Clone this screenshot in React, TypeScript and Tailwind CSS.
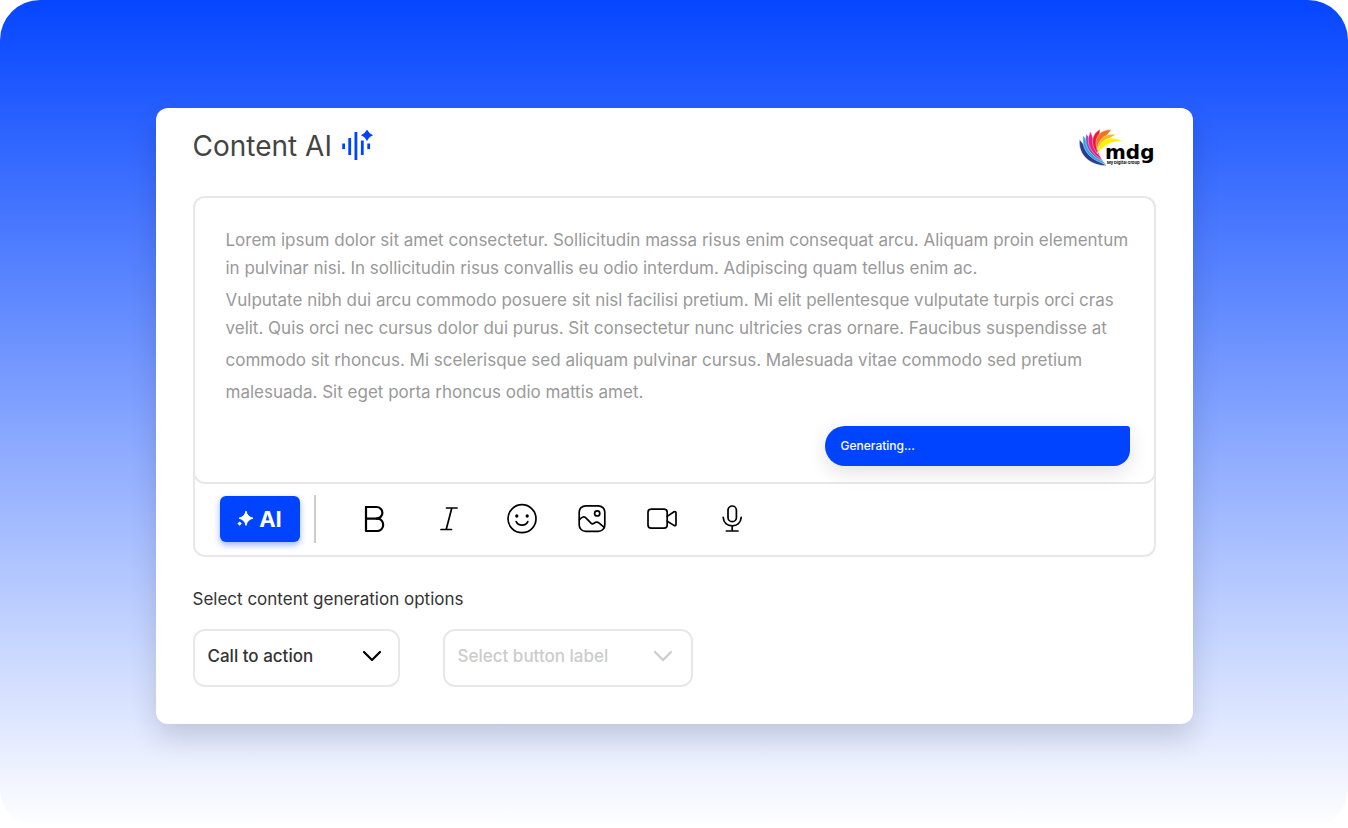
import { useState } from "react";
import type { ReactNode } from "react";

const paragraphs = [
  [
    "Lorem ipsum dolor sit amet consectetur. Sollicitudin massa risus enim consequat arcu. Aliquam proin elementum",
    "in pulvinar nisi. In sollicitudin risus convallis eu odio interdum. Adipiscing quam tellus enim ac.",
  ],
  [
    "Vulputate nibh dui arcu commodo posuere sit nisl facilisi pretium. Mi elit pellentesque vulputate turpis orci cras",
    "velit. Quis orci nec cursus dolor dui purus. Sit consectetur nunc ultricies cras ornare. Faucibus suspendisse at",
  ],
  [
    "commodo sit rhoncus. Mi scelerisque sed aliquam pulvinar cursus. Malesuada vitae commodo sed pretium",
  ],
  ["malesuada. Sit eget porta rhoncus odio mattis amet."],
];

const tools = [
  {
    name: "Bold",
    classes: "w-[34px]",
    icon: (
      <>
        <path d="M7 4V28H19a6.3 6.3 0 0 0 0-12.4H7" />
        <path d="M7 4H17.6a5.8 5.8 0 0 1 0 11.6" />
      </>
    ),
  },
  {
    name: "Italic",
    classes: "w-[38px]",
    icon: <path d="M13.5 5H24M8 26.5H18.5M18.8 5L13.2 26.5" />,
  },
  {
    name: "Emoji",
    classes: "w-8",
    icon: (
      <>
        <circle cx="16" cy="15.7" r="14" />
        <path d="M10.2 18.6C12.2 23.3 19.8 23.3 21.8 18.6" />
        <circle cx="10.8" cy="13" r="0.8" fill="currentColor" />
        <circle cx="21.2" cy="13" r="0.8" fill="currentColor" />
      </>
    ),
  },
  {
    name: "Image",
    classes: "w-8",
    icon: (
      <>
        <rect x="3.2" y="2.8" width="25.6" height="25.6" rx="6.5" />
        <circle cx="21.2" cy="10.4" r="2.6" />
        <path d="M3.4 16.8C6 13.6 8.3 13 10.6 15.6L15 20.2C16 21.2 17 21 18 20.3C20 18.8 21.4 18.7 23.2 20.2L28.2 24.4" />
      </>
    ),
  },
  {
    name: "Video",
    classes: "w-8",
    icon: (
      <>
        <rect x="2" y="6.2" width="19.2" height="19" rx="3.2" />
        <path d="M21.2 13.4L28 8.8Q30 8 30 10V21.2Q30 23.2 28 22.4L21.2 18.2" />
      </>
    ),
  },
  {
    name: "Voice",
    classes: "w-8",
    icon: (
      <>
        <rect x="12" y="3" width="8.4" height="15.6" rx="4.2" />
        <path d="M7.2 14.4C7.6 19.6 11.2 22.8 16.2 22.8S24.8 19.6 25.2 14.4M16.2 22.8V28M10.4 28H22" />
      </>
    ),
  },
];

export default function App() {
  const [action, setaction] = useState("Call to action");

  return (
    <div className="bg-white font-[Inter,sans-serif]">
      <main className="flex min-h-screen justify-center rounded-[40px] bg-linear-to-b/srgb from-[#0546ff] to-white px-6 pt-[108px] pb-[104px]">
        <section className="w-full max-w-[1037px] rounded-xl bg-white px-[37px] pt-3.5 pb-9 shadow-[0_14px_28px_rgba(0,0,0,0.14)]">
          <header className="flex items-center justify-between pb-[26px]">
            <div className="flex items-center gap-2.5">
              <h1 className="text-[28px] leading-10 text-[#444]">Content AI</h1>
              <VoiceMark />
            </div>
            <Logo />
          </header>

          {/* Editor */}
          <div className="rounded-xl border-2 border-t-0 border-[#e8e8e8]">
            <div className="-mx-0.5 flex flex-col rounded-xl border-2 border-[#e8e8e8] pt-7 pr-6 pb-4 pl-[31px]">
              <div
                contentEditable
                suppressContentEditableWarning
                role="textbox"
                aria-multiline="true"
                aria-label="Content"
                className="flex flex-col gap-1 text-[17px] leading-7 text-[#999] outline-none"
              >
                {paragraphs.map((lines, index) => (
                  <p key={index}>
                    {lines.map((line) => (
                      <span key={line} className="block">
                        {line}
                      </span>
                    ))}
                  </p>
                ))}
              </div>
              <div
                role="status"
                className="mt-5 w-full max-w-[305px] self-end rounded-[20px] rounded-tr-[3px] rounded-br-2xl bg-[#0044ff] px-4 py-2.5 text-xs leading-5 font-medium text-white shadow-[0_6px_20px_rgba(0,0,0,0.12)]"
              >
                Generating...
              </div>
            </div>

            <div className="flex items-center px-[25px] pt-[11px] pb-3">
              <button className="flex h-[46px] w-20 cursor-pointer items-center justify-center gap-1.5 rounded-md bg-[#0044ff] text-[22px] font-bold text-white shadow-[0_3px_6px_rgba(5,70,255,0.4)]">
                <svg width="16" height="16" viewBox="0 0 16 16" fill="currentColor" aria-hidden="true">
                  <path d="M9 0Q10.2 5.8 16 7.2Q10.2 8.6 9 14.4Q7.8 8.6 2 7.2Q7.8 5.8 9 0Z" stroke="currentColor" strokeLinejoin="round" />
                  <path d="M2.6 10.4L4.8 12.6L2.6 14.8L0.4 12.6Z" />
                </svg>
                AI
              </button>
              <div className="ml-3.5 h-12 border-l-2 border-[#ccc]"></div>
              <div className="ml-[42px] flex items-center gap-[38px]">
                {tools.map((tool) => (
                  <ToolButton key={tool.name} name={tool.name} classes={tool.classes}>
                    {tool.icon}
                  </ToolButton>
                ))}
              </div>
            </div>
          </div>

          {/* Options */}
          <h2 className="pt-7 text-[17px] leading-7 text-[#333]">
            Select content generation options
          </h2>
          <div className="flex flex-wrap gap-[43px] pt-4">
            <div className="relative w-[207px]">
              <select
                aria-label="Content type"
                value={action}
                onChange={(e) => setaction(e.target.value)}
                className="h-[58px] w-full cursor-pointer appearance-none rounded-xl border-2 border-[#e8e8e8] bg-white px-[13px] pb-0.5 text-[17px] font-medium text-[#333]"
              >
                <option>Call to action</option>
              </select>
              <Chevron classes="right-[18px] text-black" />
            </div>
            <div className="relative w-[250px]">
              <select
                aria-label="Button label"
                disabled
                className="h-[58px] w-full appearance-none rounded-xl border-2 border-[#e8e8e8] bg-white px-[13px] pb-0.5 text-[17px] font-medium text-[#ccc] opacity-100"
              >
                <option>Select button label</option>
              </select>
              <Chevron classes="right-5 text-[#ccc]" />
            </div>
          </div>
        </section>
      </main>
    </div>
  );
}

const ToolButton = ({
  name,
  classes,
  children,
}: {
  name: string;
  classes: string;
  children: ReactNode;
}) => {
  return (
    <button aria-label={name} className={`flex cursor-pointer justify-center text-black ${classes}`}>
      <svg
        width="32"
        height="32"
        viewBox="0 0 32 32"
        fill="none"
        stroke="currentColor"
        strokeWidth={name === "Bold" ? 2.2 : 1.7}
        strokeLinecap="round"
        strokeLinejoin="round"
      >
        {children}
      </svg>
    </button>
  );
};

const Chevron = ({ classes }: { classes: string }) => {
  return (
    <svg
      width="20"
      height="12"
      viewBox="0 0 20 12"
      fill="none"
      stroke="currentColor"
      strokeWidth="2.2"
      strokeLinecap="round"
      strokeLinejoin="round"
      aria-hidden="true"
      className={`pointer-events-none absolute top-[21px] ${classes}`}
    >
      <path d="M2 2L10 10L18 2" />
    </svg>
  );
};

const VoiceMark = () => {
  return (
    <svg width="32" height="32" viewBox="0 0 32 32" fill="#0044ff" aria-hidden="true">
      <rect x="0.2" y="13.5" width="2.8" height="5.6" />
      <rect x="6.3" y="8" width="2.8" height="17" />
      <rect x="12.5" y="2" width="2.8" height="28" />
      <rect x="18.9" y="10.5" width="2.8" height="14.5" />
      <rect x="25.3" y="13.5" width="2.8" height="5.6" />
      <path d="M25 -0.6Q26.8 3.6 31.1 5.3Q26.8 7 25 11.2Q23.2 7 18.9 5.3Q23.2 3.6 25 -0.6Z" />
    </svg>
  );
};

const Logo = () => {
  return (
    <svg width="78" height="48" viewBox="0 -5 78 48" role="img" aria-label="mdg My Digital Group">
      <g stroke="#fff" strokeWidth="0.4" strokeLinejoin="round">
        <path d="M29 38.8C12 38.5 0 28 1.5 12.5C8 20 17 32 29 38.8Z" fill="#2b3990" />
        <path d="M28.5 37.5C12 33 3 23 5.2 8.6C11 16 19 30 28.5 37.5Z" fill="#27aae1" />
        <path d="M25.5 34.5C12 29 5.5 19 8.3 6.8C14 14 19 27 25.5 34.5Z" fill="#8a52b5" />
        <path d="M24 32.5C12 26 7 15 12.6 4.4C16 13 19 25 24 32.5Z" fill="#ec1c8b" />
        <path d="M21.5 28.5C12 20 12 8 22 2.2C22 9 18 19 21.5 28.5Z" fill="#ed1c34" />
        <path d="M19.2 22.5C15.5 12 21 2 33.2 2.8C29 9 23 14 19.2 22.5Z" fill="#f37021" />
        <path d="M19.2 23C20 12 27 6 38 7.4C32 11 25 14 19.2 23Z" fill="#fdb515" />
        <path d="M19.3 27C20.5 13 31 7 45.3 14.4C35 13.5 26 17.5 19.3 27Z" fill="#fff200" />
      </g>
      <text
        x="27"
        y="32"
        fontFamily="DejaVu Sans, sans-serif"
        fontWeight="700"
        fontSize="20"
        fill="#000"
      >
        mdg
      </text>
      <text x="29" y="36.6" fontFamily="Inter, sans-serif" fontWeight="700" fontSize="4" fill="#000">
        My Digital Group
      </text>
    </svg>
  );
};
